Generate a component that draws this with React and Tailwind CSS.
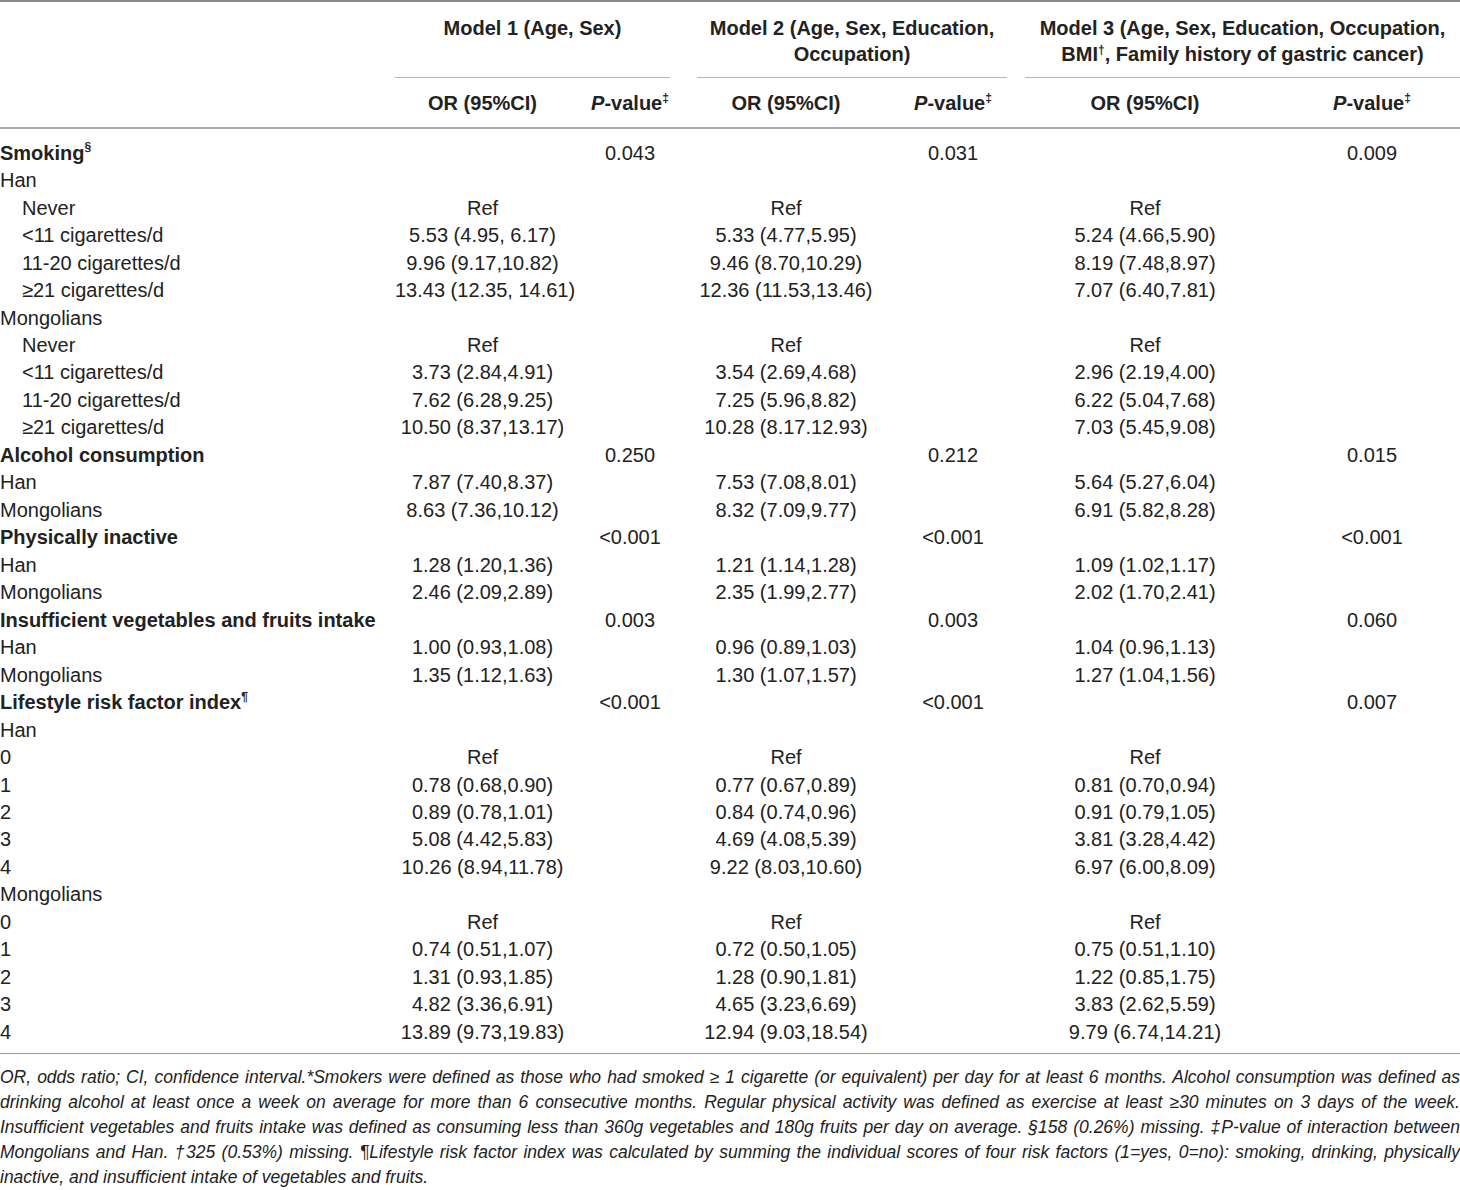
import React from 'react'

// Odds ratios by ethnicity across three adjusted models, laid out as a journal table.

const COLS = 'grid grid-cols-[395px_175px_120px_192px_142px_242px_194px]'

const ROWS = [
  { label: 'Smoking', sup: '§', bold: true, p: ['0.043', '0.031', '0.009'] },
  { label: 'Han' },
  { label: 'Never', indent: true, or: ['Ref', 'Ref', 'Ref'] },
  { label: '<11 cigarettes/d', indent: true, or: ['5.53 (4.95, 6.17)', '5.33 (4.77,5.95)', '5.24 (4.66,5.90)'] },
  { label: '11-20 cigarettes/d', indent: true, or: ['9.96 (9.17,10.82)', '9.46 (8.70,10.29)', '8.19 (7.48,8.97)'] },
  { label: '≥21 cigarettes/d', indent: true, or: ['13.43 (12.35, 14.61)', '12.36 (11.53,13.46)', '7.07 (6.40,7.81)'] },
  { label: 'Mongolians' },
  { label: 'Never', indent: true, or: ['Ref', 'Ref', 'Ref'] },
  { label: '<11 cigarettes/d', indent: true, or: ['3.73 (2.84,4.91)', '3.54 (2.69,4.68)', '2.96 (2.19,4.00)'] },
  { label: '11-20 cigarettes/d', indent: true, or: ['7.62 (6.28,9.25)', '7.25 (5.96,8.82)', '6.22 (5.04,7.68)'] },
  { label: '≥21 cigarettes/d', indent: true, or: ['10.50 (8.37,13.17)', '10.28 (8.17.12.93)', '7.03 (5.45,9.08)'] },
  { label: 'Alcohol consumption', bold: true, p: ['0.250', '0.212', '0.015'] },
  { label: 'Han', or: ['7.87 (7.40,8.37)', '7.53 (7.08,8.01)', '5.64 (5.27,6.04)'] },
  { label: 'Mongolians', or: ['8.63 (7.36,10.12)', '8.32 (7.09,9.77)', '6.91 (5.82,8.28)'] },
  { label: 'Physically inactive', bold: true, p: ['<0.001', '<0.001', '<0.001'] },
  { label: 'Han', or: ['1.28 (1.20,1.36)', '1.21 (1.14,1.28)', '1.09 (1.02,1.17)'] },
  { label: 'Mongolians', or: ['2.46 (2.09,2.89)', '2.35 (1.99,2.77)', '2.02 (1.70,2.41)'] },
  { label: 'Insufficient vegetables and fruits intake', bold: true, p: ['0.003', '0.003', '0.060'] },
  { label: 'Han', or: ['1.00 (0.93,1.08)', '0.96 (0.89,1.03)', '1.04 (0.96,1.13)'] },
  { label: 'Mongolians', or: ['1.35 (1.12,1.63)', '1.30 (1.07,1.57)', '1.27 (1.04,1.56)'] },
  { label: 'Lifestyle risk factor index', sup: '¶', bold: true, p: ['<0.001', '<0.001', '0.007'] },
  { label: 'Han' },
  { label: '0', or: ['Ref', 'Ref', 'Ref'] },
  { label: '1', or: ['0.78 (0.68,0.90)', '0.77 (0.67,0.89)', '0.81 (0.70,0.94)'] },
  { label: '2', or: ['0.89 (0.78,1.01)', '0.84 (0.74,0.96)', '0.91 (0.79,1.05)'] },
  { label: '3', or: ['5.08 (4.42,5.83)', '4.69 (4.08,5.39)', '3.81 (3.28,4.42)'] },
  { label: '4', or: ['10.26 (8.94,11.78)', '9.22 (8.03,10.60)', '6.97 (6.00,8.09)'] },
  { label: 'Mongolians' },
  { label: '0', or: ['Ref', 'Ref', 'Ref'] },
  { label: '1', or: ['0.74 (0.51,1.07)', '0.72 (0.50,1.05)', '0.75 (0.51,1.10)'] },
  { label: '2', or: ['1.31 (0.93,1.85)', '1.28 (0.90,1.81)', '1.22 (0.85,1.75)'] },
  { label: '3', or: ['4.82 (3.36,6.91)', '4.65 (3.23,6.69)', '3.83 (2.62,5.59)'] },
  { label: '4', or: ['13.89 (9.73,19.83)', '12.94 (9.03,18.54)', '9.79 (6.74,14.21)'] },
]

const NOTES = [
  'OR, odds ratio; CI, confidence interval.*Smokers were defined as those who had smoked ≥ 1 cigarette (or equivalent) per day for at least 6 months. Alcohol consumption was defined as',
  'drinking alcohol at least once a week on average for more than 6 consecutive months. Regular physical activity was defined as exercise at least ≥30 minutes on 3 days of the week.',
  'Insufficient vegetables and fruits intake was defined as consuming less than 360g vegetables and 180g fruits per day on average. §158 (0.26%) missing. ‡P-value of interaction between',
  'Mongolians and Han. †325 (0.53%) missing. ¶Lifestyle risk factor index was calculated by summing the individual scores of four risk factors (1=yes, 0=no): smoking, drinking, physically',
]

function PValue() {
  return <span><i>P</i>-value<sup className="text-[12px] -top-[0.6em]">‡</sup></span>
}

export default function App() {
  return (
    <div className="w-[1460px] bg-white text-[#222] font-['Liberation_Sans',Arial,sans-serif] text-[20px]">
      {/* Header */}
      <div className={`${COLS} border-t-2 border-[#8a8a8a] font-bold leading-[26px]`}>
        <div />
        <div className="col-span-2 mr-[20px] pt-[13px] pb-[10px] border-b border-[#b5b5b5] text-center">Model 1 (Age, Sex)</div>
        <div className="col-span-2 ml-[7px] mr-[17px] pt-[13px] pb-[10px] border-b border-[#b5b5b5] text-center">
          Model 2 (Age, Sex, Education,<br />Occupation)
        </div>
        <div className="col-span-2 ml-[1px] pt-[13px] pb-[10px] border-b border-[#b5b5b5] text-center">
          Model 3 (Age, Sex, Education, Occupation,<br />BMI<sup className="text-[12px] -top-[0.6em]">†</sup>, Family history of gastric cancer)
        </div>
      </div>
      <div className={`${COLS} h-[51px] items-center font-bold border-b-2 border-[#aaaaaa]`}>
        <div />
        <div className="text-center">OR (95%CI)</div>
        <div className="text-center"><PValue /></div>
        <div className="text-center">OR (95%CI)</div>
        <div className="text-center"><PValue /></div>
        <div className="text-center">OR (95%CI)</div>
        <div className="text-center pl-[18px]"><PValue /></div>
      </div>

      {/* Body */}
      <div className="pt-[10px] pb-[8px] border-b border-[#999]">
        {ROWS.map((r, i) => (
          <div key={i} className={`${COLS} h-[27.47px] items-center leading-none whitespace-nowrap`}>
            <div className={`${r.bold ? 'font-bold' : ''} ${r.indent ? 'pl-[22px]' : ''}`}>
              {r.label}
              {r.sup && <sup className="text-[12px] -top-[0.7em]">{r.sup}</sup>}
            </div>
            <div className="text-center">{r.or?.[0]}</div>
            <div className="text-center">{r.p?.[0]}</div>
            <div className="text-center">{r.or?.[1]}</div>
            <div className="text-center">{r.p?.[1]}</div>
            <div className="text-center">{r.or?.[2]}</div>
            <div className="text-center pl-[18px]">{r.p?.[2]}</div>
          </div>
        ))}
      </div>

      {/* Footnote */}
      <div className="pt-[11px] italic text-[17.5px] leading-[25px]">
        {NOTES.map((n, i) => (
          <p key={i} className="whitespace-nowrap text-justify [text-align-last:justify]">{n}</p>
        ))}
        <p>inactive, and insufficient intake of vegetables and fruits.</p>
      </div>
    </div>
  )
}
